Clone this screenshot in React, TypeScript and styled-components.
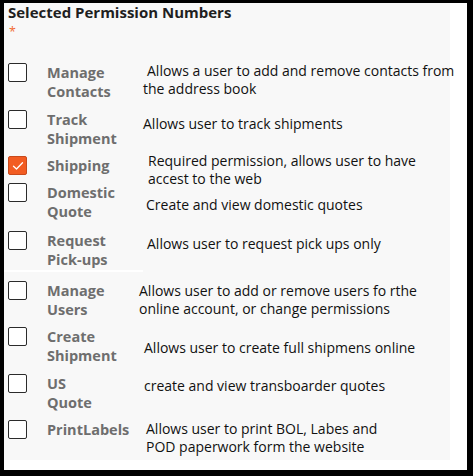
import React from "react";
import styled, { createGlobalStyle } from "styled-components";

const Global = createGlobalStyle`
  html, body { margin: 0; padding: 0; background: #ffffff; }
  body { width: 473px; height: 476px; overflow: hidden; }
`;

const Frame = styled.div`
  box-sizing: border-box;
  width: 473px;
  height: 476px;
  background: #ffffff;
  border-style: solid;
  border-color: #000000;
  border-width: 3px 6px 6px 4px;
`;

const Panel = styled.div`
  box-sizing: border-box;
  width: 446px;
  height: 457px;
  background: #f8f8f8;
  padding: 0 0 0 4px;
  display: flex;
  flex-direction: column;
`;

const Title = styled.div`
  font-family: "Open Sans", sans-serif;
  font-weight: 700;
  font-size: 15px;
  line-height: 20.5px;
  height: 20.5px;
  margin-top: -1px;
  color: #1f1f1f;
`;

const Required = styled.div`
  font-family: "Open Sans", sans-serif;
  color: #f26a32;
  font-size: 12.5px;
  line-height: 17px;
  height: 17px;
  margin-left: 1px;
`;

const List = styled.div`
  display: flex;
  flex-direction: column;
  margin-top: 23.5px;
`;

const Row = styled.div<{ $h: number; $labelW: number }>`
  display: grid;
  grid-template-columns: 39px ${(p) => p.$labelW}px 1fr;
  align-items: start;
  height: ${(p) => p.$h}px;
`;

const Box = styled.div<{ $checked?: boolean }>`
  box-sizing: border-box;
  width: 19px;
  height: 19px;
  border-radius: 2px;
  border: 1px solid ${(p) => (p.$checked ? "#c94a1c" : "#2b2b2b")};
  background: ${(p) => (p.$checked ? "#f25c22" : "#ffffff")};
  display: flex;
  align-items: center;
  justify-content: center;
`;

const Label = styled.div`
  font-family: "Open Sans", sans-serif;
  font-weight: 700;
  font-size: 14.5px;
  line-height: 19px;
  color: #6e6e6e;
`;

const Desc = styled.div<{ $dy: number }>`
  font-family: "Open Sans", sans-serif;
  font-size: 14px;
  line-height: 18px;
  color: #111111;
  margin-top: ${(p) => p.$dy}px;
  white-space: nowrap;
`;

const Line = styled.div<{ $indent?: number }>`
  padding-left: ${(p) => p.$indent ?? 0}px;
`;

const Divider = styled.div`
  width: 139px;
  height: 2px;
  background: #ffffff;
  margin: 0 0 9px -4px;
`;

type Perm = {
  label: string[];
  desc: string[];
  h: number;
  dy: number;
  dx: number;
  indent?: number;
  checked?: boolean;
};

const perms: Perm[] = [
  { label: ["Manage", "Contacts"], desc: ["Allows a user to add and remove contacts from", "the address book"], h: 47, dy: -1, dx: 143, indent: 4 },
  { label: ["Track", "Shipment"], desc: ["Allows user to track shipments"], h: 46, dy: 5, dx: 143 },
  { label: ["Shipping"], desc: ["Required permission, allows user to have", "accest to the web"], h: 27, dy: -4, dx: 148, checked: true },
  { label: ["Domestic", "Quote"], desc: ["Create and view domestic quotes"], h: 48, dy: 13, dx: 146 },
  { label: ["Request", "Pick-ups"], desc: ["Allows user to request pick ups only"], h: 39, dy: 4, dx: 147 },
  { label: ["Manage", "Users"], desc: ["Allows user to add or remove users fo rthe", "online account, or change permissions"], h: 46, dy: 1, dx: 139 },
  { label: ["Create", "Shipment"], desc: ["Allows user to create full shipmens online"], h: 47, dy: 12, dx: 144 },
  { label: ["US", "Quote"], desc: ["create and view transboarder quotes"], h: 46, dy: 3, dx: 144 },
  { label: ["PrintLabels"], desc: ["Allows user to print BOL, Labes and", "POD paperwork form the website"], h: 40, dy: 0, dx: 146 },
];

const Check = () => (
  <svg width="12" height="10" viewBox="0 0 12 10" fill="none">
    <path d="M1.5 5.2 L4.5 8 L10.5 1.8" stroke="#ffffff" strokeWidth="1.3" strokeLinecap="round" strokeLinejoin="round" />
  </svg>
);

function PermRow({ p }: { p: Perm }) {
  return (
    <Row $h={p.h} $labelW={p.dx - 47}>
      <Box $checked={p.checked}>{p.checked && <Check />}</Box>
      <Label>
        {p.label.map((l) => (
          <div key={l}>{l}</div>
        ))}
      </Label>
      <Desc $dy={p.dy}>
        {p.desc.map((d, i) => (
          <Line key={d} $indent={i === 0 ? p.indent : 0}>{d}</Line>
        ))}
      </Desc>
    </Row>
  );
}

export default function App() {
  return (
    <>
      <Global />
      <Frame>
        <Panel>
          <Title>Selected Permission Numbers</Title>
          <Required>*</Required>
          <List>
            {perms.slice(0, 5).map((p) => (
              <PermRow key={p.label.join(" ")} p={p} />
            ))}
            <Divider />
            {perms.slice(5).map((p) => (
              <PermRow key={p.label.join(" ")} p={p} />
            ))}
          </List>
        </Panel>
      </Frame>
    </>
  );
}
